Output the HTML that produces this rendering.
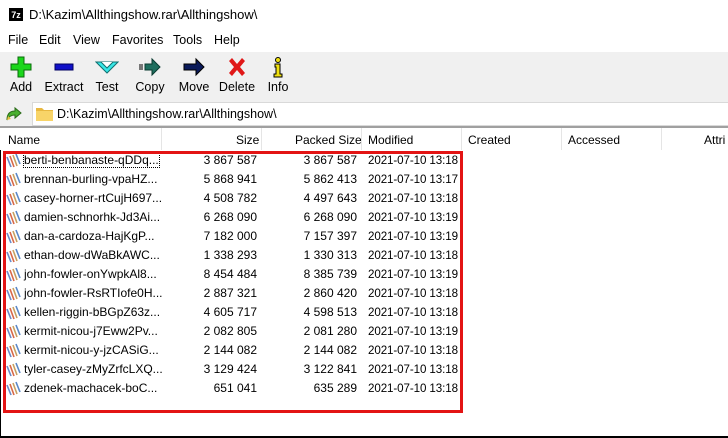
<!DOCTYPE html>
<html><head><meta charset="utf-8"><style>
*{margin:0;padding:0;box-sizing:border-box}
body{width:728px;height:438px;overflow:hidden;background:#fff;font-family:"Liberation Sans",sans-serif;font-size:12px;color:#000;position:relative}
.abs{position:absolute}
.menu span{position:absolute;top:33px;font-size:12.5px}
.tb{position:absolute;top:52px;left:0;width:728px;height:50px;background:#f0f0f0}
.btn{position:absolute;top:0;text-align:center;font-size:12.5px}
.btn svg{display:block;margin:4px auto 0}
.btn div{margin-top:2px}
.hdr{position:absolute;top:128px;left:0;width:728px;height:22px;background:#fff}
.hdr span{position:absolute;top:5px;font-size:12px}
.sep{position:absolute;top:128px;width:1px;height:22px;background:#e5e5e5}
.row{position:absolute;left:0;width:728px;height:19px;font-size:12px}
.row span{position:absolute;top:2px;white-space:nowrap}
.row span.dt{font-size:11.6px;letter-spacing:-0.1px;top:2.5px}
.ic{position:absolute;left:6px;top:2px}
</style></head><body>
<div class="abs" style="left:9px;top:8px;width:14px;height:13px;background:#000;color:#fff;font-size:9px;font-weight:bold;line-height:13px;text-align:center;border:1px solid #000">7z</div>
<div class="abs" style="left:29px;top:7px;font-size:13px">D:\Kazim\Allthingshow.rar\Allthingshow\</div>
<div class="menu"><span style="left:8px">File</span><span style="left:39px">Edit</span><span style="left:73px">View</span><span style="left:112px">Favorites</span><span style="left:173px">Tools</span><span style="left:214px">Help</span></div>
<div class="tb">
<div class="btn" style="left:8px;width:26px"><svg width="22" height="22" viewBox="0 0 22 22"><path d="M8 1h6v7h7v6h-7v7H8v-7H1V8h7z" fill="#1bd61b" stroke="#0a6a0a"/></svg><div>Add</div></div>
<div class="btn" style="left:44px;width:40px"><svg width="22" height="22" viewBox="0 0 22 22"><rect x="2" y="8" width="18" height="6" fill="#1010c8" stroke="#000060"/></svg><div>Extract</div></div>
<div class="btn" style="left:93px;width:28px"><svg width="24" height="22" viewBox="0 0 24 22"><path d="M1 6h22l-11 11z" fill="#38e8e8" stroke="#107070"/><path d="M6 6l6 6 6-6" fill="#fff" stroke="#107070"/></svg><div>Test</div></div>
<div class="btn" style="left:134px;width:32px"><svg width="24" height="22" viewBox="0 0 24 22"><rect x="1" y="8" width="4" height="6" fill="#777"/><path d="M7 8h7V3l8 8-8 8v-5H7z" fill="#1e6e5e" stroke="#0a3a30"/></svg><div>Copy</div></div>
<div class="btn" style="left:177px;width:34px"><svg width="24" height="22" viewBox="0 0 24 22"><path d="M2 8h12V3l8 8-8 8v-5H2z" fill="#0a1a5a" stroke="#000"/></svg><div>Move</div></div>
<div class="btn" style="left:218px;width:38px"><svg width="22" height="22" viewBox="0 0 22 22"><path d="M3 5l3-3 5 6 5-6 3 3-5 6 5 6-3 3-5-6-5 6-3-3 5-6z" fill="#e01818"/></svg><div>Delete</div></div>
<div class="btn" style="left:266px;width:24px"><svg width="22" height="22" viewBox="0 0 22 22"><circle cx="11" cy="4" r="2.5" fill="#f0e010" stroke="#000"/><path d="M8 8h5v10h2v3H7v-3h2v-7H8z" fill="#f0e010" stroke="#000"/></svg><div>Info</div></div>
</div>
<div class="abs" style="left:0;top:102px;width:728px;height:24px;background:#f0f0f0"></div>
<svg class="abs" style="left:5px;top:104px" width="18" height="18" viewBox="0 0 18 18"><path d="M2 16c0-6 3-9 8-9V4l6 5-6 5v-3c-3 0-6 1-8 5z" fill="#4ab030" stroke="#2a6a18"/><path d="M2 16l1-4 3 3z" fill="#e8c040"/></svg>
<div class="abs" style="left:32px;top:102px;width:696px;height:24px;background:#fff;border:1px solid #d9d9d9;border-right:none"></div>
<svg class="abs" style="left:36px;top:106px" width="17" height="15" viewBox="0 0 17 15"><path d="M0 2h6l2 2h9v11H0z" fill="#e8b840"/><path d="M0 5h17v10H0z" fill="#f8d468"/></svg>
<div class="abs" style="left:57px;top:107px;font-size:12.5px">D:\Kazim\Allthingshow.rar\Allthingshow\</div>
<div class="abs" style="left:0;top:126px;width:728px;height:2px;background:#a0a0a0"></div>
<div class="hdr"><span style="left:8px">Name</span><span style="left:236px">Size</span><span style="left:295px">Packed Size</span><span style="left:368px">Modified</span><span style="left:468px">Created</span><span style="left:568px">Accessed</span><span style="left:704px">Attri</span></div>
<div class="sep" style="left:161px"></div><div class="sep" style="left:261px"></div><div class="sep" style="left:361px"></div><div class="sep" style="left:461px"></div><div class="sep" style="left:561px"></div><div class="sep" style="left:661px"></div>
<div id="rows"></div>
<div class="abs" style="left:3px;top:151px;width:460px;height:262px;border:3px solid #e31414"></div>
<div class="abs" style="left:0;top:150px;width:1px;height:288px;background:#000"></div>
<div class="abs" style="left:0;top:436px;width:728px;height:2px;background:#000"></div>
<script>
var d=[["berti-benbanaste-qDDq...","3 867 587","3 867 587","2021-07-10 13:18"],
["brennan-burling-vpaHZ...","5 868 941","5 862 413","2021-07-10 13:17"],
["casey-horner-rtCujH697...","4 508 782","4 497 643","2021-07-10 13:18"],
["damien-schnorhk-Jd3Ai...","6 268 090","6 268 090","2021-07-10 13:19"],
["dan-a-cardoza-HajKgP...","7 182 000","7 157 397","2021-07-10 13:19"],
["ethan-dow-dWaBkAWC...","1 338 293","1 330 313","2021-07-10 13:18"],
["john-fowler-onYwpkAl8...","8 454 484","8 385 739","2021-07-10 13:19"],
["john-fowler-RsRTIofe0H...","2 887 321","2 860 420","2021-07-10 13:18"],
["kellen-riggin-bBGpZ63z...","4 605 717","4 598 513","2021-07-10 13:18"],
["kermit-nicou-j7Eww2Pv...","2 082 805","2 081 280","2021-07-10 13:19"],
["kermit-nicou-y-jzCASiG...","2 144 082","2 144 082","2021-07-10 13:18"],
["tyler-casey-zMyZrfcLXQ...","3 129 424","3 122 841","2021-07-10 13:18"],
["zdenek-machacek-boC...","651 041","635 289","2021-07-10 13:18"]];
var h="";
var ic='<svg class="ic" width="16" height="15" viewBox="0 0 16 15"><path d="M1 4l4 10" stroke="#6a8ac8" stroke-width="1.6"/><path d="M4 3l4 11" stroke="#d86848" stroke-width="1.6"/><path d="M7 2l4 11" stroke="#c8a060" stroke-width="1.6"/><path d="M10 1l4 10" stroke="#5a88c8" stroke-width="1.6"/></svg>';
d.forEach(function(r,i){h+='<div class="row" style="top:'+(151+i*19)+'px">'+ic+'<span style="left:24px'+(i==0?';outline:1px dotted #000;outline-offset:0':'')+'">'+r[0]+'</span><span style="right:'+(728-257)+'px">'+r[1]+'</span><span style="right:'+(728-357)+'px">'+r[2]+'</span><span class="dt" style="left:368px">'+r[3]+'</span></div>';});
document.getElementById("rows").innerHTML=h;
</script>
</body></html>
